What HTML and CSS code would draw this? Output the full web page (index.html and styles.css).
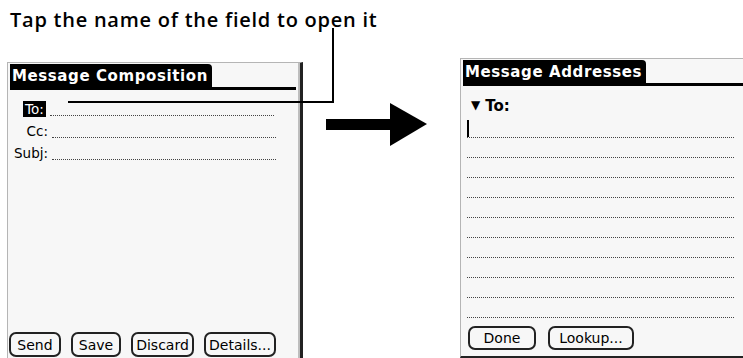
FILE: index.html
```html
<!DOCTYPE html>
<html lang="en">
<head>
<meta charset="UTF-8" />
<title>Message Composition - fields</title>
<link rel="stylesheet" href="styles.css">
</head>
<body>

<h1 class="caption">Tap the name of the field to open it</h1>
<div class="callout"></div>

<div class="stage">

  <div class="screen compose">
    <div class="title"><span>Message Composition</span></div>
    <div class="fields">
      <div class="field"><span class="label selected">To:</span><span class="line"></span></div>
      <div class="field"><span class="label">Cc:</span><span class="line"></span></div>
      <div class="field"><span class="label">Subj:</span><span class="line"></span></div>
    </div>
    <div class="buttons">
      <button class="send">Send</button>
      <button class="save">Save</button>
      <button class="discard">Discard</button>
      <button class="details">Details...</button>
    </div>
  </div>

  <svg class="arrow" width="102" height="44" viewBox="0 0 102 44">
    <rect x="0" y="16" width="66" height="11" fill="#000" />
    <polygon points="64,0 101,21 64,43" fill="#000" />
  </svg>

  <div class="screen addresses">
    <div class="title"><span>Message Addresses</span></div>
    <div class="to-head"><span class="tri">&#9660;</span>To:</div>
    <div class="lines">
      <div class="line first"><i class="cursor"></i></div>
      <div class="line"></div>
      <div class="line"></div>
      <div class="line"></div>
      <div class="line"></div>
      <div class="line"></div>
      <div class="line"></div>
      <div class="line"></div>
      <div class="line"></div>
      <div class="line"></div>
    </div>
    <div class="buttons">
      <button class="done">Done</button>
      <button class="lookup">Lookup...</button>
    </div>
  </div>

</div>

</body>
</html>
```

FILE: styles.css
```css
html, body {
  margin: 0;
  padding: 0;
}
body {
  width: 743px;
  height: 358px;
  overflow: hidden;
  background: #fff;
  color: #000;
  position: relative;
  font-family: "DejaVu Sans", sans-serif;
}
.caption {
  margin: 0;
  padding: 10px 0 0 10px;
  height: 18px;
  font-family: "Open Sans", sans-serif;
  font-weight: 600;
  font-size: 20px;
  line-height: 20px;
  letter-spacing: 0.75px;
  white-space: nowrap;
}
/* the pointer line from the caption to the To: label */
.callout {
  position: absolute;
  left: 68px;
  top: 28px;
  width: 264px;
  height: 73px;
  border-right: 2px solid #000;
  border-bottom: 2px solid #000;
  z-index: 2;
}
.stage {
  display: flex;
  align-items: flex-start;
}
.screen {
  background: #f7f7f7;
  border-top: 1px solid #b5b5b5;
  border-left: 1px solid #b5b5b5;
  display: flex;
  flex-direction: column;
  box-sizing: border-box;
}
.title {
  display: flex;
  border-bottom: 3px solid #000;
  margin-top: 1px;
  margin-left: 2px;
}
.title span {
  background: #000;
  color: #fff;
  font-weight: bold;
  font-size: 15px;
  letter-spacing: 0.6px;
  line-height: 22px;
  padding: 1px 4px 0 2px;
  border-radius: 0 4px 0 0;
}
.compose {
  margin: 34px 0 0 7px;
  width: 296px;
  height: 298px;
  border-right: 3px solid #222;
  box-shadow: inset -2px 0 #bdbdbd;
}
.compose .title {
  margin-right: 4px;
}
.fields {
  padding-top: 5px;
}
.field {
  display: flex;
  align-items: flex-end;
  height: 22px;
}
.field .label {
  width: 40px;
  text-align: right;
  font-size: 13.5px;
  line-height: 16px;
}
.field .label.selected {
  background: #000;
  color: #fff;
  width: auto;
  margin-left: 15px;
  padding: 0 2px 0 2px;
}
.field .line {
  width: 224px;
  margin-left: 4px;
  border-bottom: 1px dotted #444;
  margin-bottom: 1px;
}
.buttons {
  margin-top: auto;
  display: flex;
  gap: 10px;
  padding: 0 0 3px 1px;
}
button {
  font-family: "DejaVu Sans", sans-serif;
  font-size: 14px;
  height: 25px;
  padding: 0 2px;
  background: #f7f7f7;
  color: #000;
  border: 2px solid #222;
  border-radius: 7px;
}
.send { width: 52px; }
.save { width: 50px; }
.discard { width: 63px; }
.details { width: 72px; }
.arrow {
  margin: 75px 0 0 23px;
  display: block;
}
.addresses {
  margin: 30px 0 0 32px;
  flex: 1;
  height: 300px;
  border-bottom: 2px solid #222;
}
.to-head {
  margin: 12px 0 0 10px;
  font-weight: bold;
  font-size: 15px;
  line-height: 17px;
}
.to-head .tri {
  font-size: 12px;
  margin-right: 5px;
  position: relative;
  top: -2px;
}
.lines {
  margin: 2px 9px 0 6px;
}
.lines .line {
  height: 19px;
  border-bottom: 1px dotted #444;
}
.lines .first {
  position: relative;
}
.cursor {
  position: absolute;
  left: 0;
  bottom: 0;
  width: 2px;
  height: 17px;
  background: #000;
}
.addresses .buttons {
  gap: 12px;
  padding: 8px 0 5px 7px;
  margin-top: 0;
}
.done { width: 68px; height: 24px; }
.lookup { width: 86px; height: 24px; }
```
